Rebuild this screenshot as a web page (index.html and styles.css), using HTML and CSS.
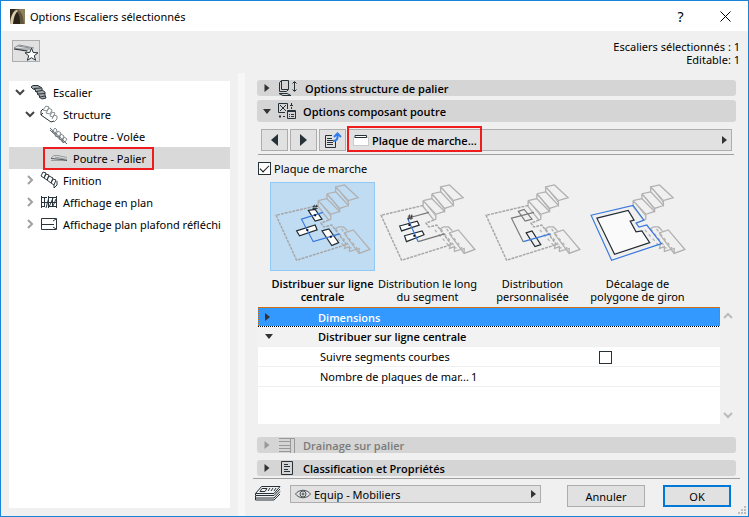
FILE: index.html
```
<!doctype html>
<html lang="fr">

<head>
    <meta charset="UTF-8">
    <meta name="viewport" content="width=device-width, initial-scale=1.0">
    <link rel="stylesheet" href="styles.css">
    <title>Options Escaliers sélectionnés</title>
</head>

<body>
    <!-- shared drawings -->
    <svg class="defs" width="0" height="0">
        <defs>
            <symbol id="stairs" viewBox="0 0 105 89">
                <g fill="none" stroke="#b0b0b0">
                    <path stroke-width="1.3" d="M66 4L75 2L89 15L79 18ZM66 4V9L79 23V18M57 11L66 9M57 11L70 26L79 23M57 11V16L70 29V26M48 18L57 16M48 18L61 32L70 29M48 18V24L59 38M61 32V37L59 38" />
                    <path d="M68 6L79 20M59 13L70 27M50 20L61 34" />
                    <path stroke-width="1.3" d="M65 47L69 45L74 45L78 49M75 51L84 48L101 68L90 72L75 52ZM90 72V67L80 70V65L75 67L76 62" />
                    <path stroke-width="1.3" stroke-dasharray="3 3" d="M60 48L76 66M66 47L82 67M72 47L88 67" />
                </g>
            </symbol>
            <symbol id="platform" viewBox="0 0 105 89">
                <path d="M48 23L5 33L26 79L77 63L62 43L54 45L51 41L59 38" fill="none" stroke="#a6a6a6" stroke-width="1.5" stroke-dasharray="3 1" />
            </symbol>
            <symbol id="hash" viewBox="0 0 8 8">
                <path d="M3 0L1.500 8M6 0L4.500 8M.5 2.500H8M0 5.500H7.500" stroke="#222" fill="none" />
            </symbol>
            <symbol id="tri-right" viewBox="0 0 5 8"><path d="M0 0L5 4L0 8Z" fill="currentColor" /></symbol>
            <symbol id="tri-down" viewBox="0 0 8 5"><path d="M0 0H8L4 5Z" fill="currentColor" /></symbol>
            <symbol id="chev-down" viewBox="0 0 10 10"><path d="M1 3L5 7L9 3" fill="none" stroke="currentColor" stroke-width="2" /></symbol>
            <symbol id="chev-right" viewBox="0 0 10 10"><path d="M3 1L7 5L3 9" fill="none" stroke="currentColor" stroke-width="2" /></symbol>
            <symbol id="chev-up" viewBox="0 0 10 10"><path d="M1 7L5 3L9 7" fill="none" stroke="currentColor" stroke-width="2" /></symbol>
        </defs>
    </svg>

    <div class="dialog">
        <header class="titlebar">
            <svg class="app-icon" width="15" height="15" viewBox="0 0 15 15">
                <rect width="15" height="15" fill="#5f543c" />
                <path d="M0 0H6C3 2 1 6 0 11Z" fill="#2e261a" />
                <path d="M10 0H15V15H14C13 7 12 3 8 1Z" fill="#8d805f" />
                <path d="M2 15C3 7 5 3 7 3C9 4 10 9 10 15Z" fill="#2a2216" />
                <path d="M0 15C1 7 3 2 7 1L8 2C5 4 4 8 3 15Z" fill="#d8cdae" />
            </svg>
            <h1>Options Escaliers sélectionnés</h1>
            <button class="title-btn" type="button" aria-label="Aide">?</button>
            <button class="title-btn" type="button" aria-label="Fermer">
                <svg width="11" height="11" viewBox="0 0 11 11"><path d="M.5 .5L10.500 10.500M10.500 .5L.5 10.500" stroke="#000" /></svg>
            </button>
        </header>

        <div class="summary">
            <button class="favorite" type="button" aria-label="Favoris">
                <svg width="26" height="20" viewBox="0 0 26 20">
                    <path d="M1 7L6 4L21 7M1 7L15 10M3 8L17 8M5 5L17 7" stroke="#8a8f92" fill="none" />
                    <path d="M1 8L14 10" stroke="#263238" fill="none" />
                    <path d="M18.500 7L20.200 11.500L25 11.800L21.300 14.700L22.600 19.300L18.500 16.700L14.400 19.300L15.700 14.700L12 11.800L16.800 11.500Z" fill="#fff" stroke="#263238" />
                </svg>
            </button>
            <p>Escaliers sélectionnés : 1
Editable: 1</p>
        </div>

        <main class="content">
            <nav class="tree">
                <ul>
                    <li class="node level-1">
                        <svg class="chev open" width="10" height="10"><use href="#chev-down" /></svg>
                        <svg width="18" height="16" viewBox="0 0 18 16" fill="none" stroke="#2b363c">
                            <path d="M1 3L3 1.500H8L12 4V6L15 8V11L16 14L12 15L9 13L10 12L7 10L8 9L5 7L6 6L3 5Z" fill="#a4abae" />
                            <path d="M4 4.500L11 4M6 7.500L12 6.500M8 10L15 9.500M10 13L15 12" />
                        </svg>
                        <a href="#">Escalier</a>
                    </li>
                    <li class="node level-2">
                        <svg class="chev open" width="10" height="10"><use href="#chev-down" /></svg>
                        <svg width="18" height="18" viewBox="0 0 18 18" fill="none">
                            <path d="M3 5L6 1L9 2L7 6ZM6 8L9 3L12 5L10 9ZM10 11L12 7L15 8L13 12ZM12 14L14 10L17 11V14L14 17" stroke="#858c90" />
                            <path d="M3 4L1 6V10L11 17L14 16M1 10L3 8" stroke="#2b363c" />
                        </svg>
                        <a href="#">Structure</a>
                    </li>
                    <li class="node level-3">
                        <svg width="18" height="18" viewBox="0 0 18 18" fill="none">
                            <path d="M2 5L5 1L7 3L5 7ZM5 9L8 4L11 6L9 10ZM9 12L11 7L14 9L12 13ZM12 15L14 10L17 12L15 15Z" stroke="#858c90" />
                            <path d="M0 1L17 17M0 3L14 16" stroke="#59636a" />
                        </svg>
                        <a href="#">Poutre - Volée</a>
                    </li>
                    <li class="node level-3 selected">
                        <span class="marked">
                            <svg width="18" height="8" viewBox="0 0 18 8" fill="none">
                                <path d="M1 4L4 1.500H8L17 3.500M5 3L17 5.500M1 6.500H17" stroke="#9a9ea0" />
                                <path d="M1 4.500L12 5.500L17 6.500" stroke="#4f585d" />
                            </svg>
                            <a href="#">Poutre - Palier</a>
                        </span>
                    </li>
                    <li class="node level-2">
                        <svg class="chev" width="10" height="10"><use href="#chev-right" /></svg>
                        <svg width="18" height="18" viewBox="0 0 18 18" fill="none" stroke="#2b363c">
                            <path d="M1 5L3 1L6 2L4 7ZM4 7L6 3L9 4L7 9ZM7 9L9 5L13 7L11 12ZM11 12L13 8L16 9L14 14ZM14 14V17L17 14V10" />
                        </svg>
                        <a href="#">Finition</a>
                    </li>
                    <li class="node level-2">
                        <svg class="chev" width="10" height="10"><use href="#chev-right" /></svg>
                        <svg width="18" height="12" viewBox="0 0 18 12" fill="none" stroke="#2b363c">
                            <path d="M1.500 0V12M4.500 1V11M8.500 0V12M12.500 1V11M16.500 0V12M1 1.500H7M8 1.500H17M1 6.500H17M8 10.500H17M1 10.500H5M6 12L9 1M9 11L13 2M13 10L16 3" />
                        </svg>
                        <a href="#">Affichage en plan</a>
                    </li>
                    <li class="node level-2">
                        <svg class="chev" width="10" height="10"><use href="#chev-right" /></svg>
                        <svg width="18" height="12" viewBox="0 0 18 12" fill="none" stroke="#2b363c">
                            <path d="M1.500 .5H16.500V11.500H1.500ZM2 6.500H14M13 3L16 1M13 9L16 11" />
                        </svg>
                        <a href="#">Affichage plan plafond réfléchi</a>
                    </li>
                </ul>
            </nav>
            <div class="splitter"></div>

            <div class="settings">
                <button class="section" type="button">
                    <svg class="arrow" width="8" height="8"><use href="#tri-right" /></svg>
                    <svg class="section-icon" width="20" height="16" viewBox="0 0 20 16" fill="none" stroke="#263238">
                        <path d="M1.500 2.500L3.500 .5H10.500V9.500L8.500 11.500H1.500ZM3.500 .5V9.500H10.500M1 13.500H9L13 15.500H5ZM16.500 2V11M14.500 3.500L16.500 1.500L18.500 3.500M14.500 9.500L16.500 11.500L18.500 9.500" />
                    </svg>
                    Options structure de palier
                </button>
                <button class="section tall" type="button">
                    <svg class="arrow" width="8" height="5"><use href="#tri-down" /></svg>
                    <svg class="section-icon" width="18" height="16" viewBox="0 0 18 16" fill="none" stroke="#263238">
                        <path d="M9.500 6V.5H.5V9.500H7M2 2L8 8M8 2L2 8M9.500 7.500H17.500V15.500H9.500ZM10 8.500H17M11 11.500H12M13 11.500H16M11 13.500H12M13 13.500H16" />
                        <path d="M13.500 0V2M12 2.500H15M13.500 4V6M2 12V15M1 13.500H3M5 13.500H7" />
                    </svg>
                    Options composant poutre
                </button>

                <div class="toolbar">
                    <button class="tool" type="button" aria-label="Précédent"><svg width="7" height="12" viewBox="0 0 7 12"><path d="M7 0V12L0 6Z" fill="#263238" /></svg></button>
                    <button class="tool" type="button" aria-label="Suivant"><svg width="7" height="12" viewBox="0 0 7 12"><path d="M0 0V12L7 6Z" fill="#263238" /></svg></button>
                    <button class="tool" type="button" aria-label="Liste">
                        <svg width="18" height="17" viewBox="0 0 18 17" fill="none">
                            <path d="M8 3.500H1.500V15.500H11.500V9M3 6.500H8M3 8.500H9M3 10.500H9M3 12.500H9" stroke="#263238" />
                            <path d="M9 9C13 9 14 7 13.500 2M10 5L13.500 1.500L17 5" stroke="#2d7ff0" stroke-width="2" />
                        </svg>
                    </button>
                    <div class="combo part">
                        <svg width="16" height="12" viewBox="0 0 16 12">
                            <rect x=".5" y="3.500" width="15" height="8" fill="#fff" stroke="#ccc" />
                            <path d="M2 3.500V1.500H13.500V3.500Z" fill="#fff" stroke="#263238" />
                        </svg>
                        <select aria-label="Composant"><option>Plaque de marche...</option></select>
                        <svg class="arrow" width="5" height="8"><use href="#tri-right" /></svg>
                        <span class="highlight"></span>
                    </div>
                </div>

                <label class="check"><input type="checkbox" checked>Plaque de marche</label>

                <div class="methods">
                    <button class="method active" type="button">
                        <svg viewBox="0 0 105 89">
                            <use href="#platform" /><use href="#stairs" />
                            <g fill="#fff" stroke="#222b30" stroke-width="1.2"><path d="M38 28L45 27L52 37L45 39ZM26 49L45 43L47 48L29 54ZM52 49L59 47L69 61L62 64Z" /></g>
                            <path d="M53 30L31 37L43 60L70 52" fill="none" stroke="#3878dc" stroke-width="1.2" />
                            <path d="M44 33H46M36 48H38M60 55H62" stroke="#111" stroke-width="2" />
                            <use href="#hash" x="42" y="22" width="6" height="6" />
                        </svg>
                        <span>Distribuer sur ligne centrale</span>
                    </button>
                    <button class="method" type="button">
                        <svg viewBox="0 0 105 89">
                            <use href="#platform" /><use href="#stairs" />
                            <path d="M54 30L32 36M43 60L70 52" stroke="#777" stroke-width="1.2" />
                            <g fill="#fff" stroke="#222b30" stroke-width="1.2"><path d="M24 44L42 39L44 43L26 49ZM29 54L47 49L49 53L31 60Z" /></g>
                            <path d="M32 36L43 60" stroke="#3878dc" stroke-width="1.2" />
                            <path d="M33 43H35M38 54H40" stroke="#111" stroke-width="2" />
                            <use href="#hash" x="32" y="32" width="6" height="6" />
                        </svg>
                        <span>Distribution le long du segment</span>
                    </button>
                    <button class="method" type="button">
                        <svg viewBox="0 0 105 89">
                            <use href="#platform" /><use href="#stairs" />
                            <path d="M54 30L31 36L43 60M38 29L44 27L52 37L45 39Z" fill="none" stroke="#777" stroke-width="1.2" />
                            <path d="M46 51L52 49L61 63L55 65Z" fill="none" stroke="#222b30" stroke-width="1.2" />
                            <path d="M43 60L71 52" stroke="#3878dc" stroke-width="1.2" />
                        </svg>
                        <span>Distribution personnalisée</span>
                    </button>
                    <button class="method" type="button">
                        <svg viewBox="0 0 105 89">
                            <use href="#stairs" />
                            <path d="M5 33L48 23L59 38L51 41L54 45L62 43L77 62L26 79Z" fill="none" stroke="#3878dc" stroke-width="1.2" />
                            <path d="M11 36L43 28L49 38L45 39L51 50L57 49L65 61L29 73Z" fill="#fafafa" stroke="#222b30" stroke-width="1.2" />
                        </svg>
                        <span>Décalage de polygone de giron</span>
                    </button>
                </div>

                <div class="list">
                    <div class="list-body">
                        <table>
                            <colgroup>
                                <col class="col-arrow">
                                <col class="col-name">
                                <col>
                            </colgroup>
                            <tbody>
                                <tr class="group current">
                                    <td><svg class="arrow" width="5" height="8"><use href="#tri-right" /></svg></td>
                                    <th colspan="2" scope="rowgroup">Dimensions</th>
                                </tr>
                                <tr class="group">
                                    <td><svg class="arrow" width="8" height="5"><use href="#tri-down" /></svg></td>
                                    <th colspan="2" scope="rowgroup">Distribuer sur ligne centrale</th>
                                </tr>
                                <tr>
                                    <td></td>
                                    <td class="name"><label for="follow">Suivre segments courbes</label></td>
                                    <td class="toggle"><input type="checkbox" id="follow"></td>
                                </tr>
                                <tr>
                                    <td></td>
                                    <td class="name">Nombre de plaques de mar...</td>
                                    <td>1</td>
                                </tr>
                            </tbody>
                        </table>
                    </div>
                    <div class="scroll">
                        <svg width="10" height="10"><use href="#chev-up" /></svg>
                        <svg width="10" height="10"><use href="#chev-down" /></svg>
                    </div>
                </div>

                <button class="section drain" type="button" disabled>
                    <svg class="arrow" width="8" height="8"><use href="#tri-right" /></svg>
                    <svg class="section-icon" width="18" height="16" viewBox="0 0 18 16" fill="none" stroke="#999">
                        <path d="M1 1.500H12M1 4.500H12M1 8.500H12M1 11.500H12M1 14.500H12M12.500 1V16M12 1.500H16.500V16" />
                    </svg>
                    Drainage sur palier
                </button>
                <button class="section" type="button">
                    <svg class="arrow" width="8" height="8"><use href="#tri-right" /></svg>
                    <svg class="section-icon" width="18" height="16" viewBox="0 0 18 16" fill="none" stroke="#263238">
                        <path d="M3.500 1.500H14.500V14.500H3.500ZM6 4.500H10M6 6.500H12M6 9.500H10M6 11.500H12" />
                    </svg>
                    Classification et Propriétés
                </button>

                <footer class="actions">
                    <svg width="26" height="16" viewBox="0 0 26 16" fill="none" stroke="#263238">
                        <path d="M6.500 1.500H25L19 8.500H.5ZM.5 8.500V10.500H19L25 4M.5 11V13H19L25 6.500M.5 13V15H19L25 9M7 3.500H12L10 6.500H5ZM15 3L13 6M18 3L16 6M21 3L19 6" />
                    </svg>
                    <div class="combo layer">
                        <svg width="16" height="10" viewBox="0 0 16 10" fill="none" stroke="#4a5357">
                            <path d="M.5 5C4 0 12 0 15.500 5C12 10 4 10 .5 5Z" /><circle cx="8" cy="5" r="3" /><circle cx="8" cy="5" r="1" />
                        </svg>
                        <select aria-label="Calque"><option>Equip - Mobiliers</option></select>
                        <svg class="arrow" width="5" height="8"><use href="#tri-right" /></svg>
                    </div>
                    <button class="btn cancel" type="button">Annuler</button>
                    <button class="btn ok" type="submit">OK</button>
                </footer>
            </div>
        </main>

        <svg class="grip" width="8" height="8" viewBox="0 0 8 8" fill="#bdbdbd">
            <path d="M6 0H8V2H6ZM3 3H5V5H3ZM6 3H8V5H6ZM0 6H2V8H0ZM3 6H5V8H3ZM6 6H8V8H6Z" />
        </svg>
    </div>
</body>

</html>
```
FILE: styles.css
```
* {
    box-sizing: border-box;
}

body {
    margin: 0;
    font-family: "Noto Sans", "Open Sans", sans-serif;
    font-size: 11px;
    color: #000;
}

button,
select,
input {
    font: inherit;
    color: inherit;
    margin: 0;
}

svg {
    flex: none;
}

.defs {
    position: absolute;
}

.dialog {
    display: flex;
    flex-direction: column;
    position: relative;
    min-height: 100vh;
    background: #f0f0f0;
    border: 1px solid #1883d7;
}

/* title bar */
.titlebar {
    display: flex;
    align-items: center;
    height: 30px;
    padding-left: 9px;
    background: #fff;
}

.titlebar h1 {
    flex: 1;
    margin: 0 0 0 5px;
    font-size: 11px;
    font-weight: normal;
}

.title-btn {
    display: flex;
    align-items: center;
    justify-content: center;
    width: 45px;
    height: 30px;
    padding: 0;
    border: 0;
    background: none;
    font-size: 14px;
}

.summary {
    display: flex;
    justify-content: space-between;
    align-items: flex-start;
    height: 42px;
    padding: 9px 8px 0 11px;
}

.summary p {
    margin: 0;
    line-height: 13px;
    text-align: right;
    white-space: pre-line;
}

.favorite {
    display: flex;
    align-items: center;
    justify-content: center;
    width: 28px;
    height: 22px;
    padding: 0;
    border: 1px solid #adadad;
    background: #e1e1e1;
}

.content {
    display: flex;
    flex: 1;
    padding: 0 8px;
}

/* tree */
.tree {
    flex: 0 0 221px;
    margin: 8px 0;
    background: #fff;
    overflow: hidden;
}

.tree ul {
    margin: 0;
    padding: 0;
    list-style: none;
}

.node,
.marked {
    display: flex;
    align-items: center;
    gap: 5px;
    white-space: nowrap;
}

.node {
    height: 22px;
}

.node a {
    color: #000;
    text-decoration: none;
}

.level-1 {
    padding-left: 6px;
}

.level-2 {
    padding-left: 16px;
}

.level-3 {
    padding-left: 41px;
}

.node.selected {
    padding-left: 36px;
    background: #d9d9d9;
}

.marked {
    height: 19px;
    padding: 0 6px 0 5px;
    outline: 2px solid #ee1c1c;
}

.chev {
    color: #a0a0a0;
}

.chev.open {
    color: #444;
}

.splitter {
    flex: 0 0 7px;
    margin: 0 8px;
    background: #f7f7f7;
}

/* right side */
.settings {
    display: flex;
    flex: 1;
    flex-direction: column;
    min-width: 0;
    padding-top: 7px;
}

.section {
    display: flex;
    align-items: center;
    height: 16px;
    margin: 0 4px;
    padding: 0 6px;
    border: 0;
    border-radius: 3px;
    background: #d5d5d5;
    text-align: left;
}

.section,
.part,
.method.active,
.group th {
    font-family: "Open Sans", "Noto Sans", sans-serif;
    font-weight: 600;
}

.section.tall {
    height: 22px;
    margin-top: 4px;
}

.section + .section:not(.tall) {
    margin-top: 7px;
}

.section:disabled {
    color: #7a7a7a;
}

.section.drain {
    margin-top: 13px;
}

.section-icon {
    margin: 0 7px;
}

.arrow {
    color: #333;
}

.section:disabled .arrow {
    color: #999;
}

.toolbar {
    display: flex;
    gap: 2px;
    margin: 7px 6px 0 5px;
    padding: 0 2px 3px 3px;
    border-bottom: 1px solid #a0a0a0;
}

.tool {
    display: flex;
    align-items: center;
    justify-content: center;
    width: 27px;
    height: 22px;
    padding: 0;
    border: 1px solid #adadad;
    background: #e1e1e1;
}

.combo {
    display: flex;
    position: relative;
    flex: 1;
    align-items: center;
    padding: 0 4px;
    border: 1px solid #adadad;
    background: #e1e1e1;
}

.combo select {
    flex: 1;
    min-width: 0;
    padding: 0 3px;
    border: 0;
    background: none;
    appearance: none;
}

.highlight {
    position: absolute;
    top: -4px;
    left: -2px;
    width: 135px;
    height: 26px;
    border: 2px solid #ee1c1c;
    pointer-events: none;
}

.check {
    display: flex;
    align-items: center;
    gap: 3px;
    margin: 6px 5px 0;
    height: 15px;
}

input[type="checkbox"] {
    display: inline-grid;
    place-content: center;
    width: 13px;
    height: 13px;
    border: 1px solid #263238;
    background: #fff;
    appearance: none;
}

input[type="checkbox"]:checked::before {
    content: "";
    width: 8px;
    height: 4px;
    border-left: 1px solid #111;
    border-bottom: 1px solid #111;
    rotate: -45deg;
    translate: 0 -1px;
}

.methods {
    display: grid;
    grid-template-columns: repeat(4, 105px);
    margin: 6px 17px 0;
}

.method {
    display: flex;
    flex-direction: column;
    align-items: center;
    gap: 6px;
    padding: 0;
    border: 0;
    background: none;
    line-height: 13px;
}

.method svg {
    width: 105px;
    height: 89px;
    border: 1px solid transparent;
}

.method.active svg {
    border-color: #90c8f6;
    background: #c0dcf3;
}

/* property list */
.list {
    display: flex;
    margin: 4px 4px 0 5px;
    height: 117px;
}

.list-body {
    flex: 1;
    background: #fff;
}

.list table {
    width: 100%;
    border-collapse: separate;
    border-spacing: 0;
    table-layout: fixed;
}

.col-arrow {
    width: 60px;
}

.col-name {
    width: 153px;
}

.list td,
.list th {
    height: 20px;
    padding: 0;
    border-bottom: 1px solid #f0f0f0;
    text-align: left;
    white-space: nowrap;
}

.list td:first-child {
    padding-left: 7px;
}

.list .name {
    padding-left: 2px;
}

.list .arrow {
    display: block;
}

.list .toggle {
    padding-left: 20px;
    text-align: center;
}

.list .toggle input {
    vertical-align: middle;
}

.group {
    background: #f2f2f2;
}

/* dotted focus frame round the current row */
.current {
    color: #fff;
    background:
        repeating-linear-gradient(90deg, #c66a10 0 1px, #3399ff 1px 2px) top / 100% 1px no-repeat,
        repeating-linear-gradient(90deg, #000 0 1px, #fff 1px 2px) bottom / 100% 1px no-repeat,
        repeating-linear-gradient(#c66a10 0 1px, #3399ff 1px 2px) left / 1px 100% no-repeat,
        repeating-linear-gradient(#c66a10 0 1px, #3399ff 1px 2px) right / 1px 100% no-repeat,
        #3399ff;
}

.list .current td,
.list .current th {
    border-bottom: 0;
}

.scroll {
    display: flex;
    flex-direction: column;
    align-items: center;
    justify-content: space-between;
    width: 16px;
    padding: 4px 0;
    color: #bbb;
}

/* footer */
.actions {
    display: flex;
    align-items: flex-start;
    margin-top: 2px;
    padding: 6px 9px 8px 2px;
    border-top: 1px solid #a0a0a0;
}

.layer {
    height: 18px;
    margin: 0 26px 0 9px;
}

.btn {
    height: 22px;
    padding: 0;
    border: 1px solid #adadad;
    background: #e1e1e1;
}

.cancel {
    width: 78px;
    margin-right: 18px;
}

.ok {
    width: 68px;
    border: 2px solid #0078d7;
}

.grip {
    position: absolute;
    right: 2px;
    bottom: 2px;
}
```
